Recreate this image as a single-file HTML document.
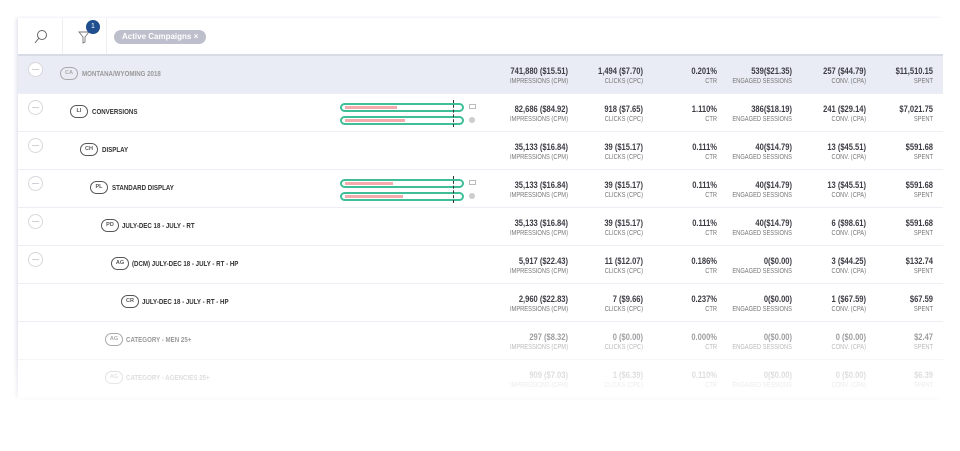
<!DOCTYPE html><html><head><meta charset="utf-8"><style>
*{margin:0;padding:0;box-sizing:border-box}
body{width:960px;height:451px;background:#fff;font-family:"Liberation Sans",sans-serif;position:relative;overflow:hidden}
.card{position:absolute;left:18px;top:18px;width:925px;height:380px;background:#fff;box-shadow:-2px 0 3px rgba(180,185,210,.35)}
.tb{position:absolute;left:18px;top:18px;width:925px;height:38px;border-bottom:2px solid #d8dbe6;background:#fff}
.row{position:absolute;left:18px;width:925px;height:38px;border-bottom:1px solid #eceef3}
.v{position:absolute;top:10px;font-size:9px;font-weight:bold;color:#3c3c44;text-align:right;width:110px;transform:scaleX(.84);transform-origin:right}
.l{position:absolute;top:22px;font-size:7px;color:#777;text-align:right;width:110px;transform:scaleX(.82);transform-origin:right}
.m{position:absolute;left:10px;top:6px;width:15px;height:15px;border:1px solid #d8d8dd;border-radius:50%;background:#fff}
.m:after{content:"";position:absolute;left:3px;right:3px;top:6px;height:1px;background:#d0d0d5}
.b{position:absolute;top:11px;width:18px;height:13px;border:1px solid #555;border-radius:7px;font-size:5.5px;font-weight:bold;text-align:center;line-height:11px;color:#555}
.n{position:absolute;top:13px;font-size:7.5px;font-weight:bold;color:#333;white-space:nowrap;transform:scaleX(.82);transform-origin:left}
.bars{position:absolute;left:322px;top:7px;width:145px;height:26px}
.p{position:absolute;left:0;width:124px;height:9px;border:2px solid #3fbf98;border-radius:5px}
.p i{position:absolute;left:3px;top:1px;height:2.5px;background:#f4a9ad}
.dash{position:absolute;left:113px;top:-1px;height:27px;border-left:1.5px dashed #333}
</style></head><body>
<div class="card"></div>
<div class="tb">
 <svg style="position:absolute;left:16px;top:11px" width="14" height="16" viewBox="0 0 14 16"><circle cx="8" cy="6" r="4.5" fill="none" stroke="#666" stroke-width="1"/><path d="M4.8 9.2L1 14" stroke="#666" stroke-width="1"/></svg>
 <div style="position:absolute;left:44px;top:0;width:1px;height:36px;background:#eee"></div>
 <svg style="position:absolute;left:60px;top:13px" width="12" height="13" viewBox="0 0 12 13"><path d="M1 1H11L7 6V11L5 12V6Z" fill="none" stroke="#777" stroke-width="0.9"/></svg>
 <div style="position:absolute;left:68px;top:2px;width:14px;height:14px;border-radius:50%;background:#1f4f8f;color:#fff;font-size:7px;text-align:center;line-height:14px">1</div>
 <div style="position:absolute;left:88px;top:0;width:1px;height:36px;background:#eee"></div>
 <div style="position:absolute;left:96px;top:12px;height:14px;padding:0 8px;border-radius:7px;background:#bdbfcc;color:#fff;font-size:8px;font-weight:bold;line-height:14px">Active Campaigns ×</div>
</div>

<div class="row" style="top:56px;background:#e9ecf4">
 <div class="m"></div><div class="b" style="left:42px;border-color:#aaa;color:#aaa">CA</div><div class="n" style="left:64px;color:#999">MONTANA/WYOMING 2018</div>
 <div class="v" style="left:440px">741,880 ($15.51)</div><div class="l" style="left:440px">IMPRESSIONS (CPM)</div>
 <div class="v" style="left:515px">1,494 ($7.70)</div><div class="l" style="left:515px">CLICKS (CPC)</div>
 <div class="v" style="left:589px">0.201%</div><div class="l" style="left:589px">CTR</div>
 <div class="v" style="left:664px">539($21.35)</div><div class="l" style="left:664px">ENGAGED SESSIONS</div>
 <div class="v" style="left:738px">257 ($44.79)</div><div class="l" style="left:738px">CONV. (CPA)</div>
 <div class="v" style="left:805px">$11,510.15</div><div class="l" style="left:805px">SPENT</div>
</div>

<div class="row" style="top:94px">
 <div class="m"></div><div class="b" style="left:52px">LI</div><div class="n" style="left:74px">CONVERSIONS</div>
 <div class="bars"><div class="p" style="top:2px"><i style="width:52px"></i></div><div class="p" style="top:15px"><i style="width:60px"></i></div><div class="dash"></div>
 <div style="position:absolute;left:129px;top:3px;width:7px;height:5px;border:1px solid #bbb"></div><div style="position:absolute;left:129px;top:16px;width:6px;height:6px;border-radius:50%;background:#ccc"></div></div>
 <div class="v" style="left:440px">82,686 ($84.92)</div><div class="l" style="left:440px">IMPRESSIONS (CPM)</div>
 <div class="v" style="left:515px">918 ($7.65)</div><div class="l" style="left:515px">CLICKS (CPC)</div>
 <div class="v" style="left:589px">1.110%</div><div class="l" style="left:589px">CTR</div>
 <div class="v" style="left:664px">386($18.19)</div><div class="l" style="left:664px">ENGAGED SESSIONS</div>
 <div class="v" style="left:738px">241 ($29.14)</div><div class="l" style="left:738px">CONV. (CPA)</div>
 <div class="v" style="left:805px">$7,021.75</div><div class="l" style="left:805px">SPENT</div>
</div>

<div class="row" style="top:132px">
 <div class="m"></div><div class="b" style="left:62px">CH</div><div class="n" style="left:84px">DISPLAY</div>
 <div class="v" style="left:440px">35,133 ($16.84)</div><div class="l" style="left:440px">IMPRESSIONS (CPM)</div>
 <div class="v" style="left:515px">39 ($15.17)</div><div class="l" style="left:515px">CLICKS (CPC)</div>
 <div class="v" style="left:589px">0.111%</div><div class="l" style="left:589px">CTR</div>
 <div class="v" style="left:664px">40($14.79)</div><div class="l" style="left:664px">ENGAGED SESSIONS</div>
 <div class="v" style="left:738px">13 ($45.51)</div><div class="l" style="left:738px">CONV. (CPA)</div>
 <div class="v" style="left:805px">$591.68</div><div class="l" style="left:805px">SPENT</div>
</div>

<div class="row" style="top:170px">
 <div class="m"></div><div class="b" style="left:72px">PL</div><div class="n" style="left:94px">STANDARD DISPLAY</div>
 <div class="bars"><div class="p" style="top:2px"><i style="width:48px"></i></div><div class="p" style="top:15px"><i style="width:58px"></i></div><div class="dash"></div>
 <div style="position:absolute;left:129px;top:3px;width:7px;height:5px;border:1px solid #bbb"></div><div style="position:absolute;left:129px;top:16px;width:6px;height:6px;border-radius:50%;background:#ccc"></div></div>
 <div class="v" style="left:440px">35,133 ($16.84)</div><div class="l" style="left:440px">IMPRESSIONS (CPM)</div>
 <div class="v" style="left:515px">39 ($15.17)</div><div class="l" style="left:515px">CLICKS (CPC)</div>
 <div class="v" style="left:589px">0.111%</div><div class="l" style="left:589px">CTR</div>
 <div class="v" style="left:664px">40($14.79)</div><div class="l" style="left:664px">ENGAGED SESSIONS</div>
 <div class="v" style="left:738px">13 ($45.51)</div><div class="l" style="left:738px">CONV. (CPA)</div>
 <div class="v" style="left:805px">$591.68</div><div class="l" style="left:805px">SPENT</div>
</div>

<div class="row" style="top:208px">
 <div class="m"></div><div class="b" style="left:83px">PD</div><div class="n" style="left:104px">JULY-DEC 18 - JULY - RT</div>
 <div class="v" style="left:440px">35,133 ($16.84)</div><div class="l" style="left:440px">IMPRESSIONS (CPM)</div>
 <div class="v" style="left:515px">39 ($15.17)</div><div class="l" style="left:515px">CLICKS (CPC)</div>
 <div class="v" style="left:589px">0.111%</div><div class="l" style="left:589px">CTR</div>
 <div class="v" style="left:664px">40($14.79)</div><div class="l" style="left:664px">ENGAGED SESSIONS</div>
 <div class="v" style="left:738px">6 ($98.61)</div><div class="l" style="left:738px">CONV. (CPA)</div>
 <div class="v" style="left:805px">$591.68</div><div class="l" style="left:805px">SPENT</div>
</div>

<div class="row" style="top:246px">
 <div class="m"></div><div class="b" style="left:93px">AG</div><div class="n" style="left:114px">(DCM) JULY-DEC 18 - JULY - RT - HP</div>
 <div class="v" style="left:440px">5,917 ($22.43)</div><div class="l" style="left:440px">IMPRESSIONS (CPM)</div>
 <div class="v" style="left:515px">11 ($12.07)</div><div class="l" style="left:515px">CLICKS (CPC)</div>
 <div class="v" style="left:589px">0.186%</div><div class="l" style="left:589px">CTR</div>
 <div class="v" style="left:664px">0($0.00)</div><div class="l" style="left:664px">ENGAGED SESSIONS</div>
 <div class="v" style="left:738px">3 ($44.25)</div><div class="l" style="left:738px">CONV. (CPA)</div>
 <div class="v" style="left:805px">$132.74</div><div class="l" style="left:805px">SPENT</div>
</div>

<div class="row" style="top:284px">
 <div class="b" style="left:103px">CR</div><div class="n" style="left:124px">JULY-DEC 18 - JULY - RT - HP</div>
 <div class="v" style="left:440px">2,960 ($22.83)</div><div class="l" style="left:440px">IMPRESSIONS (CPM)</div>
 <div class="v" style="left:515px">7 ($9.66)</div><div class="l" style="left:515px">CLICKS (CPC)</div>
 <div class="v" style="left:589px">0.237%</div><div class="l" style="left:589px">CTR</div>
 <div class="v" style="left:664px">0($0.00)</div><div class="l" style="left:664px">ENGAGED SESSIONS</div>
 <div class="v" style="left:738px">1 ($67.59)</div><div class="l" style="left:738px">CONV. (CPA)</div>
 <div class="v" style="left:805px">$67.59</div><div class="l" style="left:805px">SPENT</div>
</div>

<div class="row" style="top:322px;opacity:.5">
 <div class="b" style="left:87px">AG</div><div class="n" style="left:108px">CATEGORY - MEN 25+</div>
 <div class="v" style="left:440px">297 ($8.32)</div><div class="l" style="left:440px">IMPRESSIONS (CPM)</div>
 <div class="v" style="left:515px">0 ($0.00)</div><div class="l" style="left:515px">CLICKS (CPC)</div>
 <div class="v" style="left:589px">0.000%</div><div class="l" style="left:589px">CTR</div>
 <div class="v" style="left:664px">0($0.00)</div><div class="l" style="left:664px">ENGAGED SESSIONS</div>
 <div class="v" style="left:738px">0 ($0.00)</div><div class="l" style="left:738px">CONV. (CPA)</div>
 <div class="v" style="left:805px">$2.47</div><div class="l" style="left:805px">SPENT</div>
</div>

<div class="row" style="top:360px;opacity:.22;border-bottom:none">
 <div class="b" style="left:87px">AG</div><div class="n" style="left:108px">CATEGORY - AGENCIES 25+</div>
 <div class="v" style="left:440px">909 ($7.03)</div><div class="l" style="left:440px">IMPRESSIONS (CPM)</div>
 <div class="v" style="left:515px">1 ($6.39)</div><div class="l" style="left:515px">CLICKS (CPC)</div>
 <div class="v" style="left:589px">0.110%</div><div class="l" style="left:589px">CTR</div>
 <div class="v" style="left:664px">0($0.00)</div><div class="l" style="left:664px">ENGAGED SESSIONS</div>
 <div class="v" style="left:738px">0 ($0.00)</div><div class="l" style="left:738px">CONV. (CPA)</div>
 <div class="v" style="left:805px">$6.39</div><div class="l" style="left:805px">SPENT</div>
</div>
<div style="position:absolute;left:0;top:360px;width:960px;height:40px;background:linear-gradient(rgba(255,255,255,0),rgba(255,255,255,.6))"></div>
</body></html>
